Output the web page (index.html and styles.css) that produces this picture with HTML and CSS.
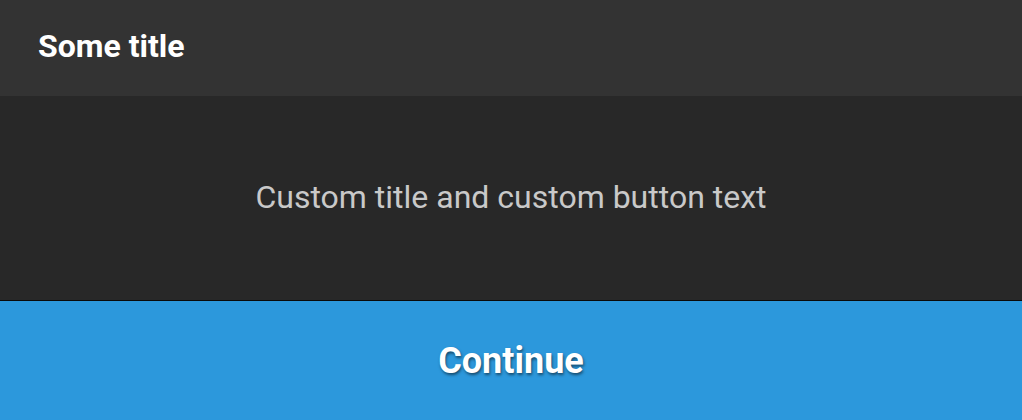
FILE: index.html
```html
<!DOCTYPE html>
<html>
<head>
<meta charset="utf-8">
<link rel="stylesheet" href="styles.css">
</head>
<body>
<div class="dialog">
  <div class="header"><h1 class="title">Some title</h1></div>
  <div class="content"><p class="message">Custom title and custom button text</p></div>
  <button class="btn">Continue</button>
</div>
</body>
</html>
```
FILE: styles.css
```css
html, body { margin: 0; padding: 0; height: 100%; }
body { font-family: Roboto, "Liberation Sans", sans-serif; background: #282828; }
.dialog { display: flex; flex-direction: column; height: 420px; width: 1022px; }
.header { height: 96px; background: #333333; display: flex; align-items: center; padding: 0 0 4px 38px; box-sizing: border-box; }
.title { margin: 0; font-size: 32px; font-weight: 700; color: #ffffff; }
.content { height: 204px; background: #282828; display: flex; align-items: center; justify-content: center; border-bottom: 1px solid #0a0a0a; padding-bottom: 2px; box-sizing: border-box; height: 205px; }
.message { margin: 0; font-size: 32px; color: #c9c9c9; }
.btn { flex: 1; border: none; margin: 0; background: #2c98dc; color: #fff; font-family: inherit; font-size: 36px; font-weight: 700; text-shadow: 1px 2px 3px rgba(0,0,0,0.5); padding: 0; }
```
